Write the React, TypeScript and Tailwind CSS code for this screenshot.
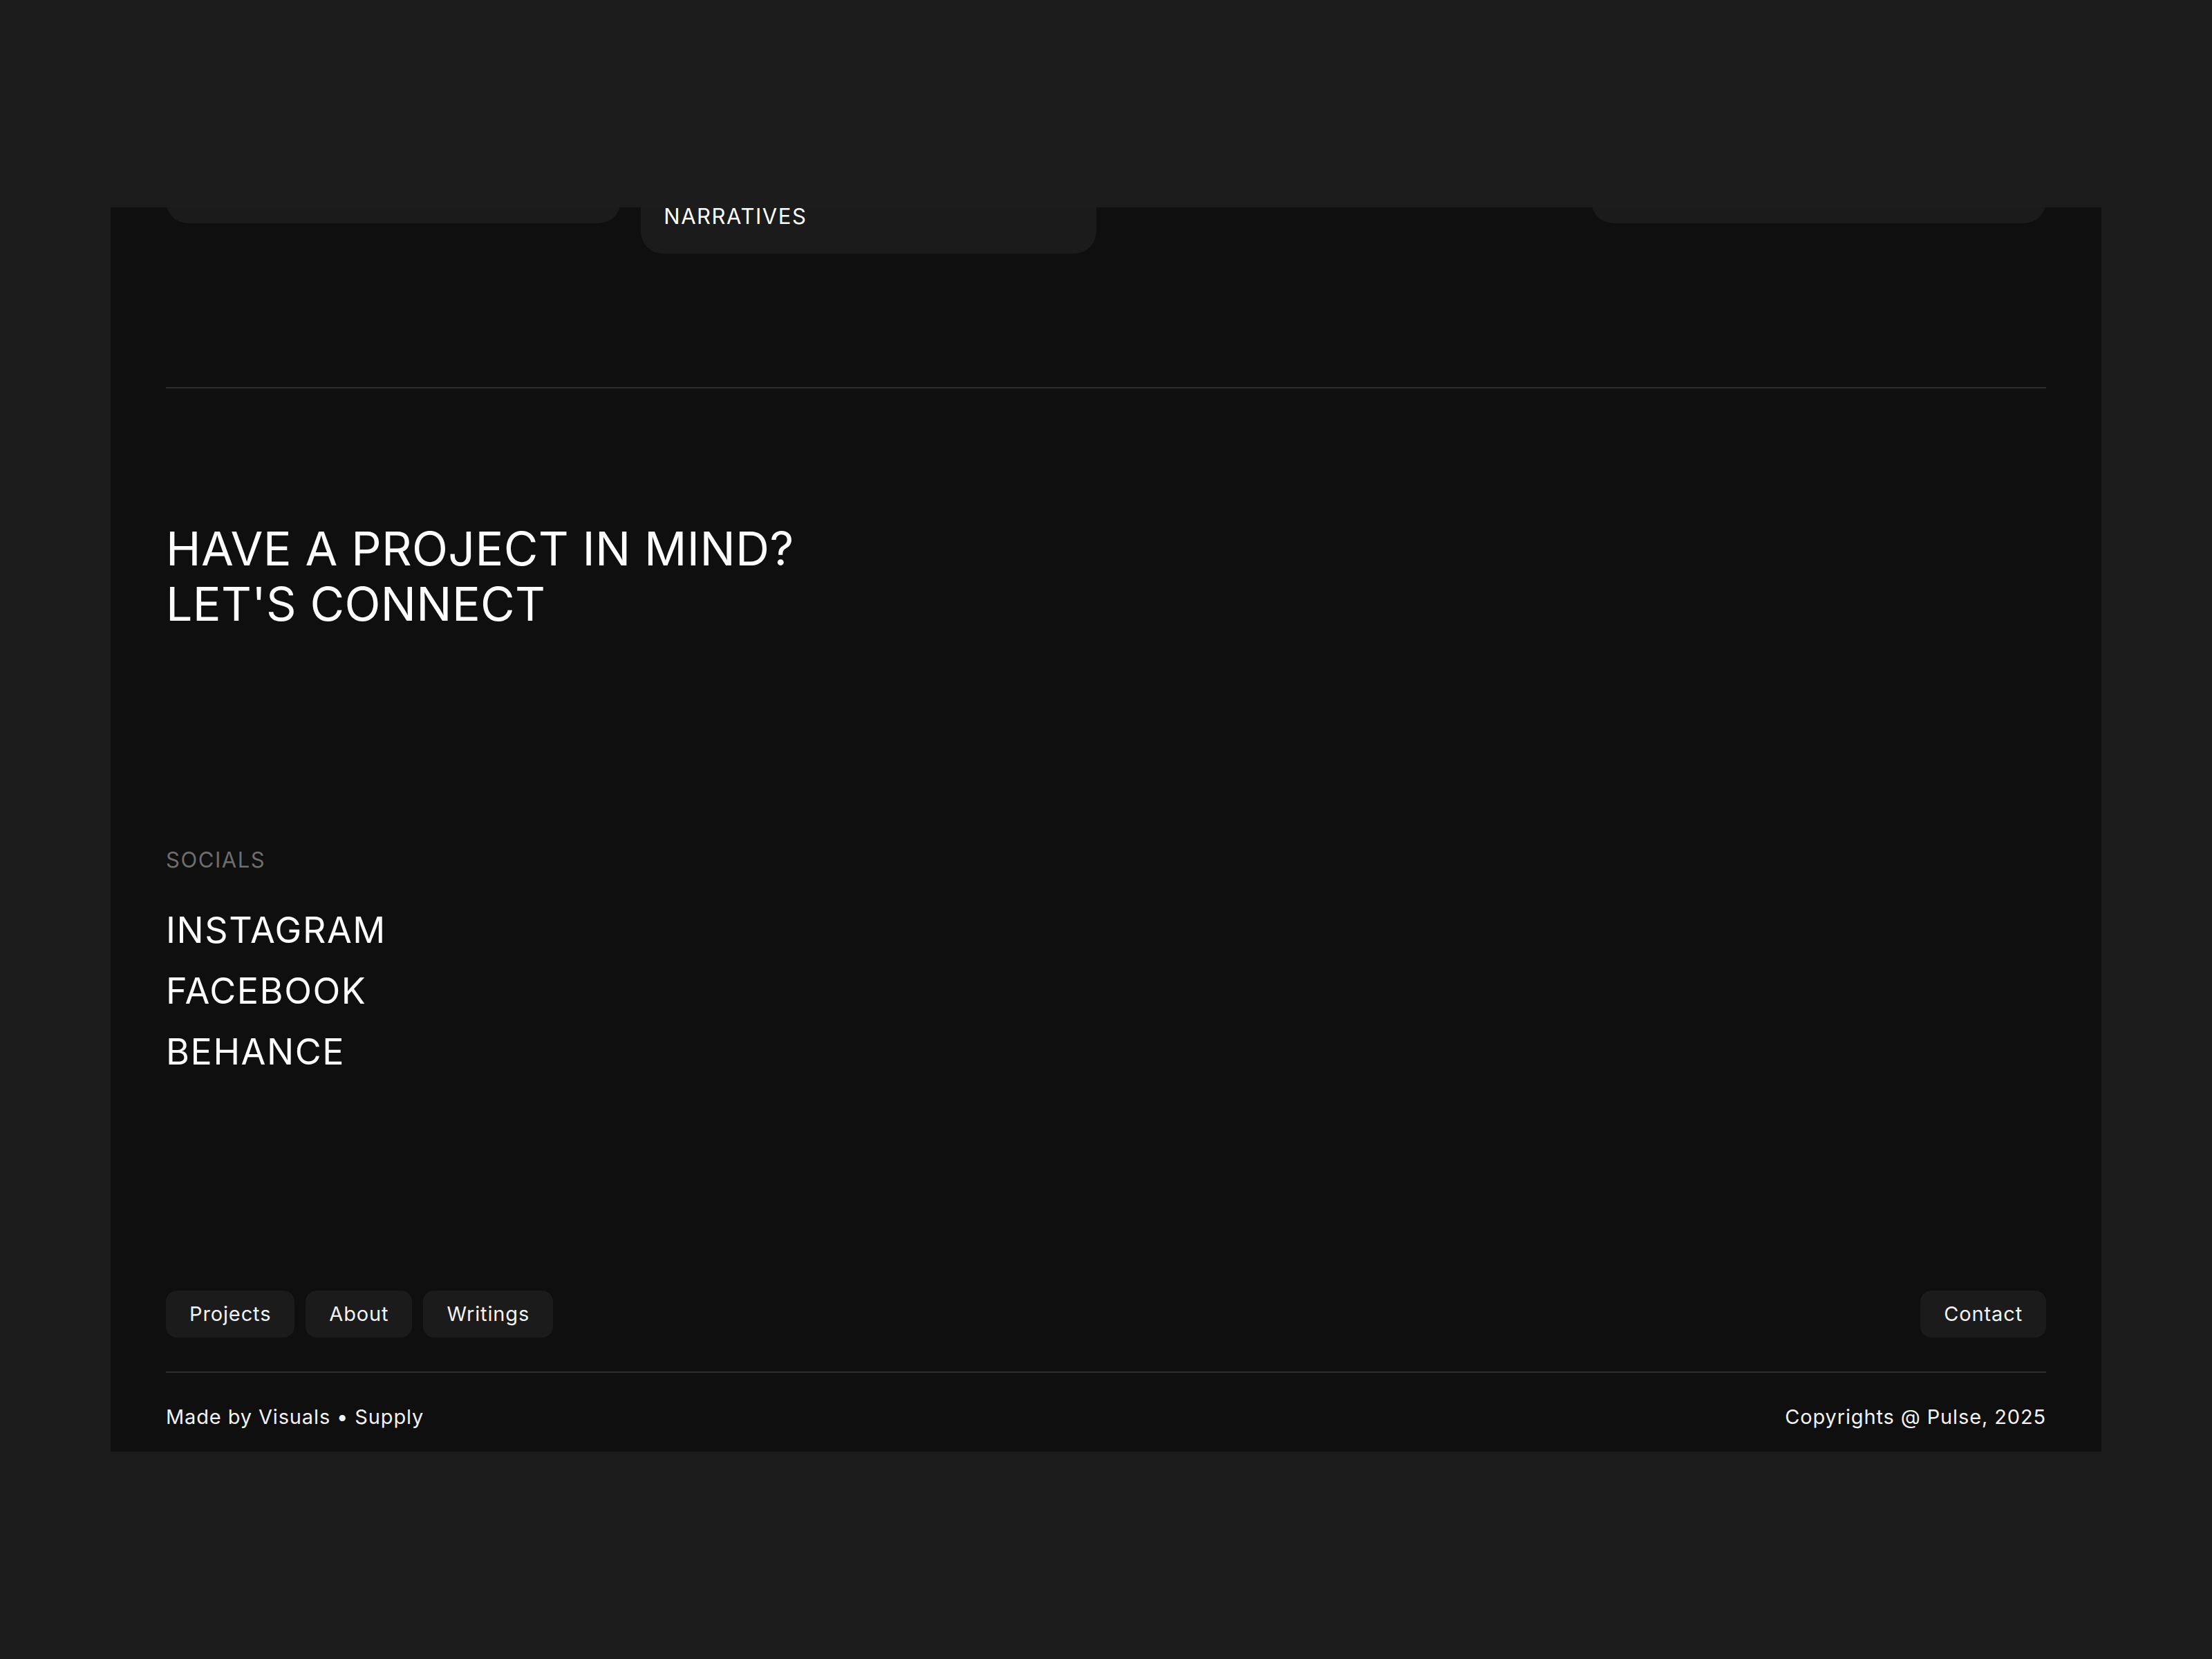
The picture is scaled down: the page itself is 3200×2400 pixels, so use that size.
import React from "react";

const font = { fontFamily: "Inter, 'Noto Sans', sans-serif" };

const navLinks = ["Projects", "About", "Writings"];
const socials = ["INSTAGRAM", "FACEBOOK", "BEHANCE"];

const NavPill: React.FC<{ label: string }> = ({ label }) => (
  <a className="h-[68px] px-[34px] rounded-[16px] bg-[#1b1b1b] text-[29px] tracking-[0.03em] text-[#f2f2f2] flex items-center">
    {label}
  </a>
);

const App: React.FC = () => {
  return (
    <div style={font} className="min-h-screen bg-[#1c1c1c] pt-[300px] px-[160px] pb-[300px]">
      <div className="bg-[#0f0f0f] h-[1800px] overflow-hidden px-[80px] flex flex-col">
        {/* bottoms of the cards from the section above */}
        <div className="grid grid-cols-4 gap-[29px] items-start -mt-[200px] h-[267px]">
          <div className="h-[223px] rounded-[32px] bg-[#1b1b1b]" />
          <div className="h-[267px] rounded-[32px] bg-[#1b1b1b] flex flex-col justify-end px-[33px] pb-[41px]">
            <span className="text-[31px] leading-[26px] tracking-[0.05em] text-white">NARRATIVES</span>
          </div>
          <div className="h-[150px] rounded-[32px] bg-[#1b1b1b]" />
          <div className="h-[223px] rounded-[32px] bg-[#1b1b1b]" />
        </div>

        <div className="mt-[193px] h-[2px] bg-[#2e2e2e]" />

        <h2 className="mt-[191px] text-[68px] leading-[80px] tracking-[0.005em] text-white font-normal">
          HAVE A PROJECT IN MIND?
          <br />
          LET'S CONNECT
        </h2>

        <p className="mt-[311px] text-[31px] leading-[40px] tracking-[0.05em] text-[#6e6e6e]">SOCIALS</p>
        <ul className="mt-[38px] flex flex-col">
          {socials.map((s) => (
            <li key={s} className="text-[52px] leading-[88px] tracking-[0.03em] text-white">
              {s}
            </li>
          ))}
        </ul>

        <div className="mt-auto flex items-center justify-between">
          <div className="flex gap-[16px]">
            {navLinks.map((l) => (
              <NavPill key={l} label={l} />
            ))}
          </div>
          <NavPill label="Contact" />
        </div>

        <div className="mt-[49px] h-[2px] bg-[#2e2e2e]" />

        <div className="mt-[44px] pb-[30px] flex justify-between text-[29px] leading-[40px] tracking-[0.03em] text-[#f2f2f2]">
          <span>Made by Visuals • Supply</span>
          <span>Copyrights @ Pulse, 2025</span>
        </div>
      </div>
    </div>
  );
};

export default App;
